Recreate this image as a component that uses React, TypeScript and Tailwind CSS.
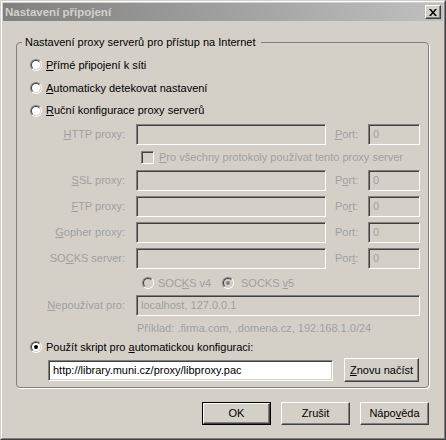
import type { ReactNode } from "react";

const gray = "text-[#a0a0a0]";

function U({ children }: { children: ReactNode }) {
  return <span className="underline underline-offset-1 decoration-1">{children}</span>;
}

function Radio({ checked = false, disabled = false }: { checked?: boolean; disabled?: boolean }) {
  return (
    <span className="inline-block w-[12px] h-[12px] shrink-0 rounded-full border border-t-[#808080] border-l-[#808080] border-r-white border-b-white">
      <span
        className={`flex w-[10px] h-[10px] items-center justify-center rounded-full border border-t-[#404040] border-l-[#404040] border-r-[#d4d0c8] border-b-[#d4d0c8] ${
          disabled ? "bg-[#d4d0c8]" : "bg-white"
        }`}
      >
        {checked && (
          <span className={`w-[4px] h-[4px] rounded-full ${disabled ? "bg-[#808080]" : "bg-black"}`} />
        )}
      </span>
    </span>
  );
}

function Field({ w, value, enabled = false }: { w: string; value?: string; enabled?: boolean }) {
  return (
    <div
      className={`${w} h-[21px] shrink-0 flex items-center pl-[4px] whitespace-nowrap overflow-hidden border border-t-[#808080] border-l-[#808080] border-r-white border-b-white shadow-[inset_1px_1px_0_#404040,inset_-1px_-1px_0_#d4d0c8] ${
        enabled ? "bg-white text-black" : "bg-[#d4d0c8] text-[#a0a0a0]"
      }`}
    >
      {value}
    </div>
  );
}

function Btn({ children, def = false, w = "w-[69px]", h = "h-[23px]" }: { children: ReactNode; def?: boolean; w?: string; h?: string }) {
  const bevel = (
    <div className="w-full h-full flex items-center justify-center border border-t-white border-l-white border-r-[#404040] border-b-[#404040] shadow-[inset_-1px_-1px_0_#808080]">
      {children}
    </div>
  );
  return <div className={`${w} ${h} shrink-0 ${def ? "border border-black" : ""}`}>{bevel}</div>;
}

function ProxyRow({ label, portLabel, mt }: { label: ReactNode; portLabel: ReactNode; mt: string }) {
  return (
    <div className={`${mt} h-[21px] flex items-center ${gray}`}>
      <div className="w-[108px] text-right">{label}</div>
      <div className="ml-[11px]">
        <Field w="w-[190px]" />
      </div>
      <div className="ml-[9px] w-[33px]">{portLabel}</div>
      <Field w="w-[52px]" value="0" />
    </div>
  );
}

export default function App() {
  return (
    <div
      className="w-[446px] h-[440px] bg-[#d4d0c8] text-black text-[11px] leading-[13px] border border-t-[#d4d0c8] border-l-[#d4d0c8] border-r-[#404040] border-b-[#404040]"
      style={{ fontFamily: '"Liberation Sans", Arial, sans-serif' }}
    >
      <div className="h-full p-[1px] border border-t-white border-l-white border-r-[#808080] border-b-[#808080]">
        {/* title bar */}
        <div className="h-[18px] flex items-center bg-linear-to-r from-[#808080] to-[#c0c0c0]">
          <span className="pl-[2px] font-bold text-[11.5px] text-[#d4d0c8]">Nastavení připojení</span>
          <div className="ml-auto mr-[2px] w-[16px] h-[14px] bg-[#d4d0c8] border border-t-white border-l-white border-r-[#404040] border-b-[#404040] shadow-[inset_-1px_-1px_0_#808080] flex items-center justify-center">
            <svg width="8" height="7" viewBox="0 0 8 7">
              <path d="M0 0h2l2 2.5L6 0h2L5 3.5 8 7H6L4 4.5 2 7H0l3-3.5z" fill="#000" />
            </svg>
          </div>
        </div>

        <div className="pl-[13px]">
          <fieldset className="w-[413px] mt-[14px] border border-[#808080] rounded-[4px] pb-[5px] shadow-[1px_1px_0_#fff]">
            <legend className="ml-[5px] pl-[3px] pr-[5px] leading-[14px]">
              Nastavení proxy serverů pro přístup na Internet
            </legend>

            <div className="pt-[5px]">
              <div className="h-[22px] flex items-center gap-[4px] pl-[13px]">
                <Radio />
                <span>
                  <U>P</U>římé připojení k síti
                </span>
              </div>
              <div className="mt-[1px] h-[22px] flex items-center gap-[4px] pl-[13px]">
                <Radio />
                <span>
                  <U>A</U>utomaticky detekovat nastavení
                </span>
              </div>
              <div className="h-[23px] flex items-center gap-[4px] pl-[13px]">
                <Radio />
                <span>
                  <U>R</U>uční konfigurace proxy serverů
                </span>
              </div>

              <ProxyRow
                mt="mt-[2px]"
                label={
                  <>
                    <U>H</U>TTP proxy:
                  </>
                }
                portLabel={
                  <>
                    <U>P</U>ort:
                  </>
                }
              />

              <div className={`mt-[3px] h-[18px] flex items-center pl-[124px] gap-[5px] ${gray}`}>
                <span className="w-[13px] h-[13px] shrink-0 bg-[#d4d0c8] border border-t-[#808080] border-l-[#808080] border-r-white border-b-white shadow-[inset_1px_1px_0_#404040,inset_-1px_-1px_0_#d4d0c8]" />
                <span>
                  <U>P</U>ro všechny protokoly používat tento proxy server
                </span>
              </div>

              <ProxyRow
                mt="mt-[4px]"
                label={
                  <>
                    <U>S</U>SL proxy:
                  </>
                }
                portLabel={
                  <>
                    P<U>o</U>rt:
                  </>
                }
              />
              <ProxyRow
                mt="mt-[5px]"
                label={
                  <>
                    <U>F</U>TP proxy:
                  </>
                }
                portLabel={
                  <>
                    Po<U>r</U>t:
                  </>
                }
              />
              <ProxyRow
                mt="mt-[5px]"
                label={
                  <>
                    <U>G</U>opher proxy:
                  </>
                }
                portLabel="Port:"
              />
              <ProxyRow
                mt="mt-[5px]"
                label={
                  <>
                    SO<U>C</U>KS server:
                  </>
                }
                portLabel={
                  <>
                    Por<U>t</U>:
                  </>
                }
              />

              <div className={`mt-[5px] h-[18px] flex items-center pl-[125px] ${gray}`}>
                <div className="w-[80px] flex items-center gap-[4px]">
                  <Radio disabled />
                  <span>
                    SOC<U>K</U>S v4
                  </span>
                </div>
                <div className="flex items-center gap-[7px]">
                  <Radio disabled checked />
                  <span>
                    SOCKS <U>v</U>5
                  </span>
                </div>
              </div>

              <div className={`mt-[3px] h-[21px] flex items-center ${gray}`}>
                <div className="w-[108px] text-right">
                  <U>N</U>epoužívat pro:
                </div>
                <div className="ml-[11px]">
                  <Field w="w-[284px]" value="localhost, 127.0.0.1" />
                </div>
              </div>

              <div className={`mt-[4px] h-[16px] flex items-center pl-[120px] ${gray}`}>
                Příklad: .firma.com, .domena.cz, 192.168.1.0/24
              </div>

              <div className="mt-[3px] h-[16px] flex items-center gap-[4px] pl-[13px]">
                <Radio checked />
                <span>
                  Použít skript pro <U>a</U>utomatickou konfiguraci:
                </span>
              </div>

              <div className="mt-[3px] h-[24px] flex items-center pl-[31px]">
                <Field w="w-[285px]" value="http://library.muni.cz/proxy/libproxy.pac" enabled />
                <div className="ml-[11px]">
                  <Btn w="w-[75px]" h="h-[24px]">
                    <span>
                      <U>Z</U>novu načíst
                    </span>
                  </Btn>
                </div>
              </div>
            </div>
          </fieldset>

          <div className="w-[413px] mt-[14px] flex justify-end gap-[10px]">
            <Btn def>OK</Btn>
            <Btn>Zrušit</Btn>
            <Btn>
              <span>
                Nápo<U>v</U>ěda
              </span>
            </Btn>
          </div>
        </div>
      </div>
    </div>
  );
}
